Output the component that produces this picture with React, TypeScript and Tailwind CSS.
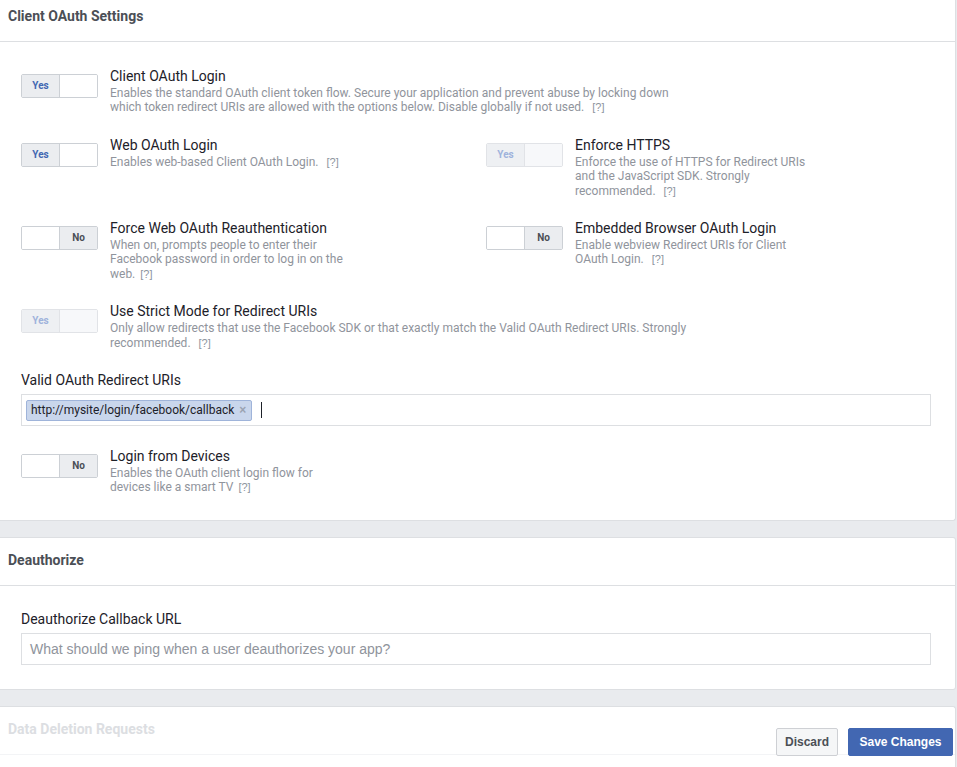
import React from "react";

function Toggle({ on, disabled }: { on: boolean; disabled?: boolean }) {
  const wrap = disabled
    ? "flex w-[77px] h-[24px] shrink-0 rounded-[2px] border border-[#e1e3e7] overflow-hidden"
    : "flex w-[77px] h-[24px] shrink-0 rounded-[2px] border border-[#ccd0d5] overflow-hidden";
  const divider = disabled ? "border-r border-[#e1e3e7]" : "border-r border-[#ccd0d5]";
  const activeBg = disabled ? "bg-[#eef0f3]" : "bg-[#ebedf0]";
  const inactiveBg = disabled ? "bg-[#f7f8fa]" : "bg-white";
  const yesColor = disabled ? "text-[#9fb3dc]" : "text-[#4267b2]";
  return (
    <div className={wrap}>
      <div
        className={`w-[38px] h-full flex items-center justify-center ${divider} ${on ? activeBg : inactiveBg}`}
      >
        {on && <span className={`text-[10px] font-bold leading-none ${yesColor}`}>Yes</span>}
      </div>
      <div className={`flex-1 h-full flex items-center justify-center ${on ? inactiveBg : activeBg}`}>
        {!on && <span className="text-[10px] font-bold leading-none text-[#4b4f56]">No</span>}
      </div>
    </div>
  );
}

function Q({ tight }: { tight?: boolean }) {
  return (
    <span
      className={
        tight
          ? "ml-[2px] text-[11px] font-['Liberation_Sans',Arial,sans-serif] text-[#8d949e]"
          : "ml-[5px] text-[11px] font-['Liberation_Sans',Arial,sans-serif] text-[#8d949e]"
      }
    >
      [?]
    </span>
  );
}

function Setting({
  on,
  disabled,
  title,
  desc,
  width,
  tight,
}: {
  on: boolean;
  disabled?: boolean;
  title: string;
  desc: string;
  width: string;
  tight?: boolean;
}) {
  return (
    <div className="flex items-start">
      <div className="mt-[7px]">
        <Toggle on={on} disabled={disabled} />
      </div>
      <div className="ml-[12px]">
        <div className="text-[14px] leading-[18px] text-[#1d2129]">{title}</div>
        <div className={`mt-[1px] text-[12px] leading-[14.4px] text-[#90949c] ${width}`}>
          {desc} <Q tight={tight} />
        </div>
      </div>
    </div>
  );
}

export default function App() {
  return (
    <div className="relative w-[957px] min-h-[767px] bg-[#e9ebee] font-[Roboto,sans-serif] overflow-hidden">
      {/* Panel 1 */}
      <div className="mr-[1px] bg-white border-r border-b border-[#dddfe2] rounded-br-[3px]">
        <div className="h-[42px] border-b border-[#dddfe2] pt-[7px] px-[8px]">
          <div className="text-[14px] leading-[18px] font-bold text-[#4b4f56]">Client OAuth Settings</div>
        </div>
        <div className="pl-[21px] pr-[24px] pt-[25px] pb-[25px] flex flex-col gap-[21px]">
          <Setting
            on
            title="Client OAuth Login"
            desc="Enables the standard OAuth client token flow. Secure your application and prevent abuse by locking down which token redirect URIs are allowed with the options below. Disable globally if not used."
            width="max-w-[584px]"
          />
          <div className="grid grid-cols-2 gap-x-[20px]">
            <Setting on title="Web OAuth Login" desc="Enables web-based Client OAuth Login." width="max-w-[242px]" />
            <Setting
              on
              disabled
              title="Enforce HTTPS"
              desc="Enforce the use of HTTPS for Redirect URIs and the JavaScript SDK. Strongly recommended."
              width="max-w-[242px]"
            />
          </div>
          <div className="grid grid-cols-2 gap-x-[20px]">
            <Setting
              on={false}
              title="Force Web OAuth Reauthentication"
              desc="When on, prompts people to enter their Facebook password in order to log in on the web."
              width="max-w-[242px]"
              tight
            />
            <Setting
              on={false}
              title="Embedded Browser OAuth Login"
              desc="Enable webview Redirect URIs for Client OAuth Login."
              width="max-w-[242px]"
            />
          </div>
          <Setting
            on
            disabled
            title="Use Strict Mode for Redirect URIs"
            desc="Only allow redirects that use the Facebook SDK or that exactly match the Valid OAuth Redirect URIs. Strongly recommended."
            width="max-w-[584px]"
          />
          <div>
            <div className="text-[14px] leading-[18px] text-[#1d2129]">Valid OAuth Redirect URIs</div>
            <div className="mt-[5px] h-[32px] border border-[#dddfe2] flex items-center pl-[4px]">
              <div className="h-[21px] flex items-center pl-[4px] pr-[5px] bg-[#c9d6ec] border border-[#9fb4da] rounded-[2px]">
                <span className="text-[12px] leading-none text-[#1d2129]">http://mysite/login/facebook/callback</span>
                <span className="ml-[5px] text-[12px] leading-none font-bold text-[#9aa3b2] font-['Liberation_Sans',Arial,sans-serif]">
                  ×
                </span>
              </div>
              <div className="ml-[9px] w-[1px] h-[16px] bg-[#1d2129]" />
            </div>
          </div>
          <Setting
            on={false}
            title="Login from Devices"
            desc="Enables the OAuth client login flow for devices like a smart TV"
            width="max-w-[242px]"
            tight
          />
        </div>
      </div>

      {/* Panel 2 */}
      <div className="mt-[16px] mr-[1px] bg-white border-y border-r border-[#dddfe2] rounded-r-[3px]">
        <div className="h-[48px] border-b border-[#dddfe2] pt-[13px] px-[8px]">
          <div className="text-[14px] leading-[18px] font-bold text-[#4b4f56]">Deauthorize</div>
        </div>
        <div className="pl-[21px] pr-[24px] py-[24px]">
          <div className="text-[14px] leading-[18px] text-[#1d2129]">Deauthorize Callback URL</div>
          <div className="mt-[5px] h-[32px] border border-[#dddfe2] flex items-center px-[8px]">
            <span className="text-[14px] leading-none text-[#90949c] font-['Liberation_Sans',Arial,sans-serif]">
              What should we ping when a user deauthorizes your app?
            </span>
          </div>
        </div>
      </div>

      {/* Panel 3 */}
      <div className="mt-[16px] mr-[1px] bg-white border-t border-r border-[#dddfe2] rounded-tr-[3px]">
        <div className="h-[48px] border-b border-[#f3f4f6] pt-[13px] px-[8px]">
          <div className="text-[14px] leading-[18px] font-bold text-[#dcdee2]">Data Deletion Requests</div>
        </div>
        <div className="h-[120px]" />
      </div>

      {/* Sticky footer */}
      <div className="fixed bottom-[11px] right-[4px] flex gap-[10px] font-['Liberation_Sans',Arial,sans-serif]">
        <button className="w-[62px] h-[28px] rounded-[2px] border border-[#ced0d4] bg-[#f5f6f7] text-[12px] font-bold text-[#4b4f56]">
          Discard
        </button>
        <button className="w-[105px] h-[28px] rounded-[2px] border border-[#4267b2] bg-[#4267b2] text-[12px] font-bold text-white">
          Save Changes
        </button>
      </div>
    </div>
  );
}
